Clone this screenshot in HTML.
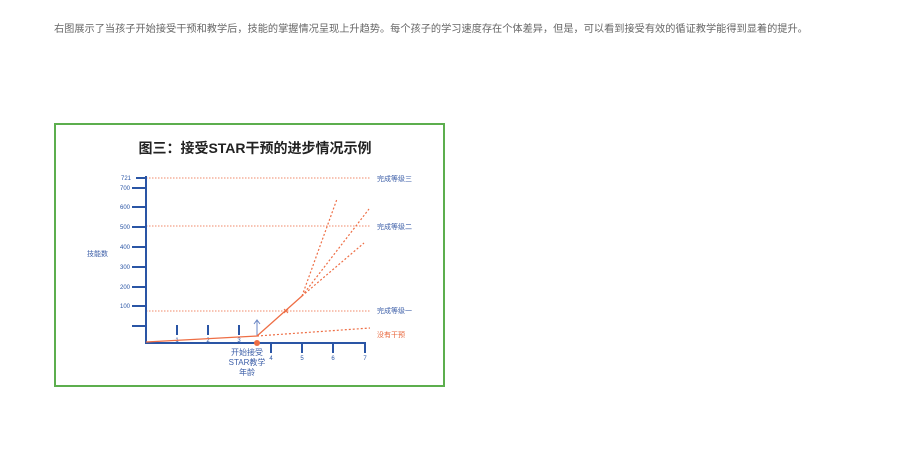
<!DOCTYPE html>
<html><head><meta charset="utf-8"><style>
body{margin:0;width:900px;height:466px;background:#fff;position:relative;overflow:hidden;font-family:"Liberation Sans","Noto Sans CJK SC",sans-serif}
.p{position:absolute;left:54px;top:23px;font-size:10.2px;color:#666;white-space:nowrap;line-height:14px}
svg{position:absolute;left:0;top:0}
</style></head><body>
<div class="p">右图展示了当孩子开始接受干预和教学后，技能的掌握情况呈现上升趋势。每个孩子的学习速度存在个体差异，但是，可以看到接受有效的循证教学能得到显着的提升。</div>
<svg width="900" height="466" font-family="Liberation Sans, Noto Sans CJK SC, sans-serif">
<rect x="55" y="124" width="389" height="262" fill="#fff" stroke="#5cae4e" stroke-width="2"/>
<text x="255" y="153" text-anchor="middle" font-size="14" font-weight="bold" fill="#222">图三：接受STAR干预的进步情况示例</text>
<g stroke="#f08a6a" stroke-width="1" stroke-dasharray="1.5,1.5">
<line x1="146" y1="178" x2="370" y2="178"/><line x1="146" y1="226" x2="370" y2="226"/><line x1="146" y1="311" x2="370" y2="311"/>
</g>
<g fill="#3d5fa8" font-size="7">
<text x="377" y="181">完成等级三</text><text x="377" y="229">完成等级二</text><text x="377" y="313">完成等级一</text>
<text x="87" y="256">技能数</text>
</g>
<text x="377" y="337" fill="#e8653a" font-size="7">没有干预</text>
<g stroke="#2a55a5" stroke-width="2">
<line x1="146" y1="176" x2="146" y2="343"/><line x1="145" y1="343" x2="366" y2="343"/>
<line x1="146" y1="178" x2="136" y2="178"/><line x1="146" y1="188" x2="132" y2="188"/><line x1="146" y1="207" x2="132" y2="207"/><line x1="146" y1="227" x2="132" y2="227"/><line x1="146" y1="247" x2="132" y2="247"/><line x1="146" y1="267" x2="132" y2="267"/><line x1="146" y1="287" x2="132" y2="287"/><line x1="146" y1="306" x2="132" y2="306"/><line x1="146" y1="326" x2="132" y2="326"/>
<line x1="271" y1="343" x2="271" y2="353"/><line x1="302" y1="343" x2="302" y2="353"/><line x1="333" y1="343" x2="333" y2="353"/><line x1="365" y1="343" x2="365" y2="353"/>
<line x1="177" y1="325" x2="177" y2="335"/><line x1="208" y1="325" x2="208" y2="335"/><line x1="239" y1="325" x2="239" y2="335"/>
</g>
<g fill="#2a55a5" font-size="6" text-anchor="end">
<text x="131" y="180">721</text><text x="130" y="190">700</text><text x="130" y="209">600</text><text x="130" y="229">500</text><text x="130" y="249">400</text><text x="130" y="269">300</text><text x="130" y="289">200</text><text x="130" y="308">100</text>
</g>
<g fill="#2a55a5" font-size="6" text-anchor="middle">
<text x="177" y="342">1</text><text x="208" y="342">2</text><text x="239" y="342">3</text>
<text x="271" y="360">4</text><text x="302" y="360">5</text><text x="333" y="360">6</text><text x="365" y="360">7</text>
</g>
<g fill="#3d5fa8" font-size="8" text-anchor="middle">
<text x="247" y="355">开始接受</text><text x="247" y="365">STAR教学</text><text x="247" y="375">年龄</text>
</g>
<line x1="257" y1="336" x2="257" y2="321" stroke="#6a86c4" stroke-width="1"/>
<path d="M254 324 L257 320 L260 324" fill="none" stroke="#6a86c4" stroke-width="1"/>
<polyline points="146,342 257,336 302,296" fill="none" stroke="#ee6e45" stroke-width="1.3"/>
<path d="M284 309 L288 313 M288 309 L284 313" stroke="#ee6e45" stroke-width="1"/>
<g stroke="#ee6e45" stroke-width="1.2" stroke-dasharray="2,2">
<line x1="302" y1="296" x2="337" y2="199"/><line x1="302" y1="296" x2="369" y2="209"/><line x1="302" y1="296" x2="364" y2="243"/><line x1="257" y1="336" x2="370" y2="328"/>
</g>
<circle cx="257" cy="343" r="3" fill="#ee6e45"/>
</svg>
</body></html>
